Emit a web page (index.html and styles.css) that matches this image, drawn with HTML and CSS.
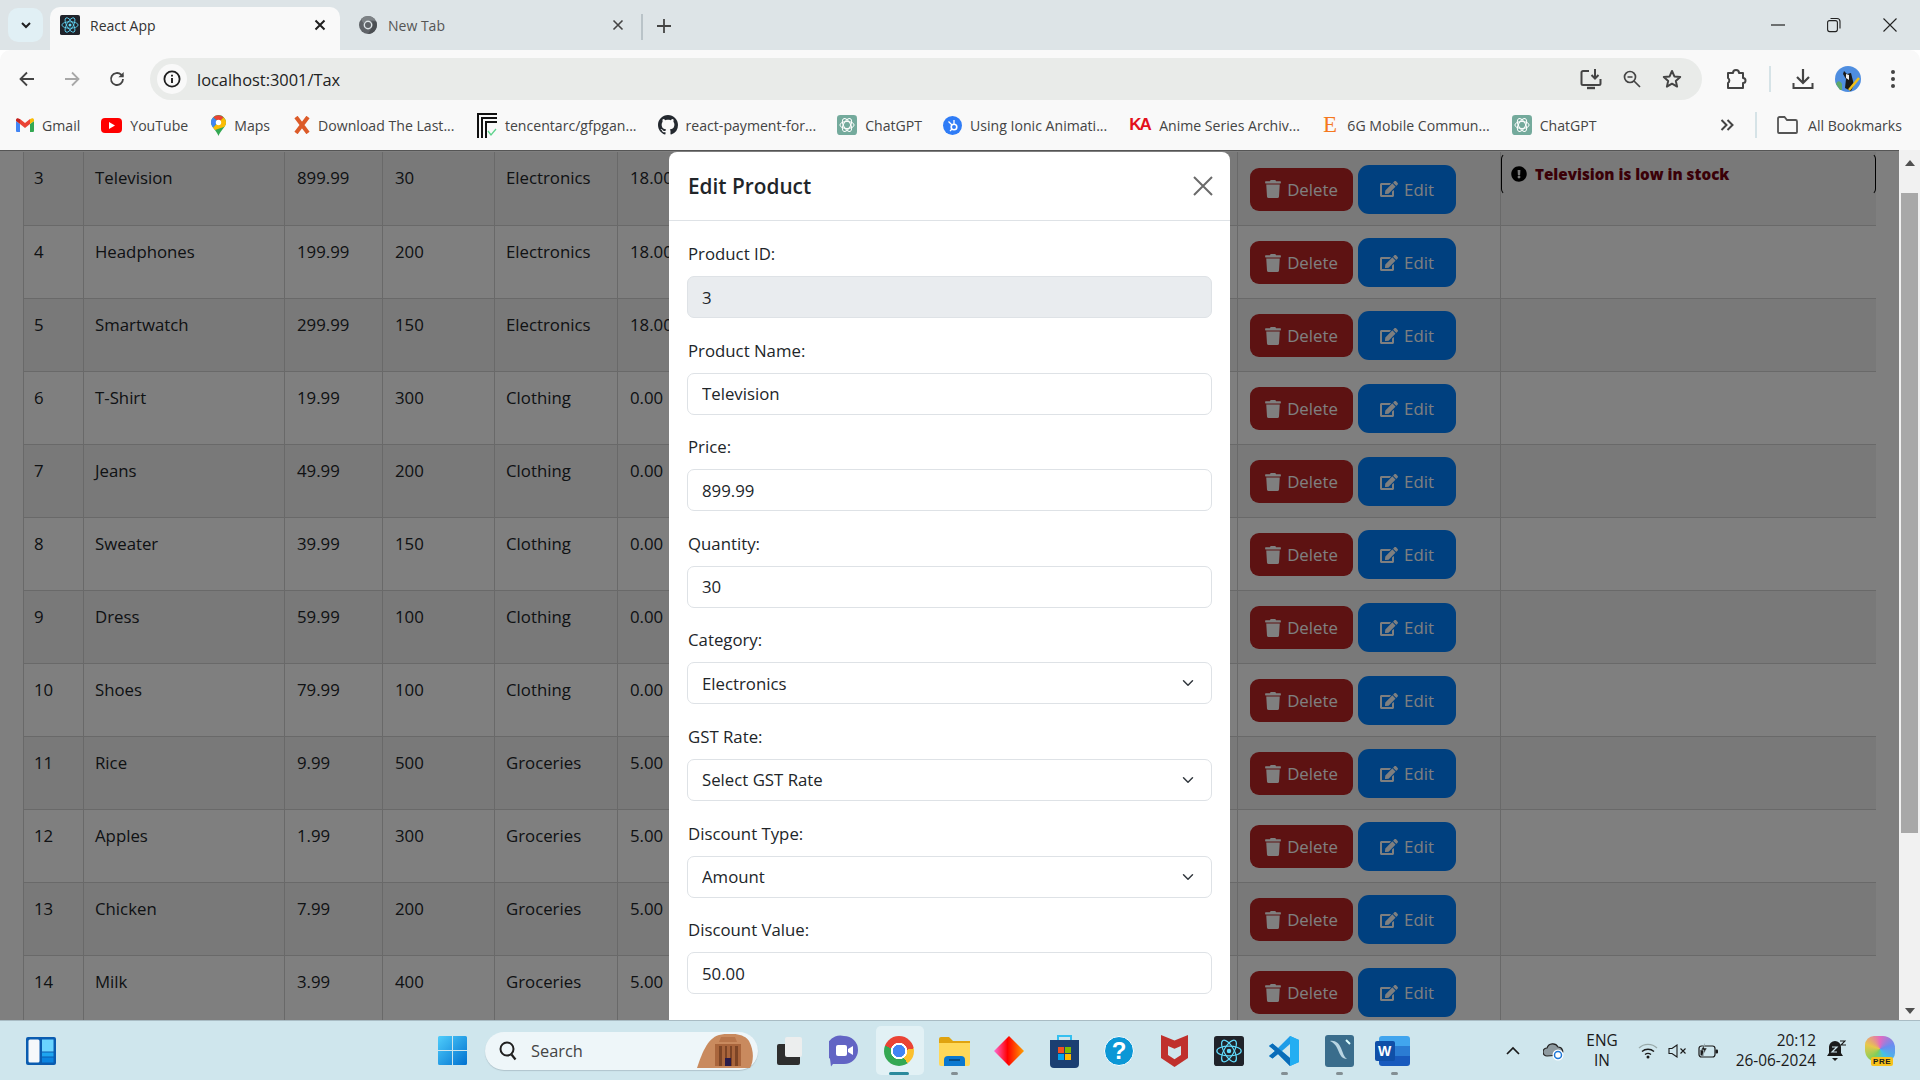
FILE: index.html
```html
<!DOCTYPE html>
<html lang="en">
<head>
    <meta charset="UTF-8">
    <title>React App</title>
    <link rel="stylesheet" href="styles.css">
</head>
<body>
    <svg class="defs" width="0" height="0">
        <symbol id="i-trash" viewBox="0 0 448 512"><path fill="currentColor" d="M432 32H312l-9.4-18.7A24 24 0 0 0 281.1 0H166.8a23.72 23.72 0 0 0-21.4 13.3L136 32H16A16 16 0 0 0 0 48v32a16 16 0 0 0 16 16h416a16 16 0 0 0 16-16V48a16 16 0 0 0-16-16zM53.2 467a48 48 0 0 0 47.9 45h245.8a48 48 0 0 0 47.9-45L416 128H32z"/></symbol>
        <symbol id="i-edit" viewBox="0 0 576 512"><path fill="currentColor" d="M402.6 83.2l90.2 90.2c3.8 3.8 3.8 10 0 13.8L274.4 405.6l-92.8 10.3c-12.4 1.4-22.9-9.1-21.5-21.5l10.3-92.8L388.8 83.2c3.8-3.8 10-3.8 13.8 0zm162-22.9l-48.8-48.8c-15.2-15.2-39.9-15.2-55.2 0l-35.4 35.4c-3.8 3.8-3.8 10 0 13.8l90.2 90.2c3.8 3.8 10 3.8 13.8 0l35.4-35.4c15.2-15.3 15.2-40 0-55.2zM384 346.2V448H64V128h229.8c3.2 0 6.2-1.3 8.5-3.5l40-40c7.6-7.6 2.2-20.5-8.5-20.5H48C21.5 64 0 85.5 0 112v352c0 26.5 21.5 48 48 48h352c26.5 0 48-21.5 48-48V306.2c0-10.7-12.9-16-20.5-8.5l-40 40c-2.2 2.3-3.5 5.3-3.5 8.5z"/></symbol>
        <symbol id="i-react" viewBox="0 0 32 32"><rect width="32" height="32" rx="3" fill="#20232a"/><g fill="none" stroke="#61dafb" stroke-width="1.3"><ellipse cx="16" cy="16" rx="13" ry="5.2"/><ellipse cx="16" cy="16" rx="13" ry="5.2" transform="rotate(60 16 16)"/><ellipse cx="16" cy="16" rx="13" ry="5.2" transform="rotate(120 16 16)"/></g><circle cx="16" cy="16" r="2.4" fill="#61dafb"/></symbol>
        <symbol id="i-gpt" viewBox="0 0 24 24"><rect width="24" height="24" rx="4" fill="#74aa9c"/><g fill="none" stroke="#fff" stroke-width="1.2"><ellipse cx="12" cy="12" rx="8.5" ry="4.2"/><ellipse cx="12" cy="12" rx="8.5" ry="4.2" transform="rotate(60 12 12)"/><ellipse cx="12" cy="12" rx="8.5" ry="4.2" transform="rotate(120 12 12)"/></g></symbol>
    </svg>

    <div class="tabstrip">
        <div class="tab-search"><svg width="14" height="14" viewBox="0 0 14 14"><path d="M3 5l4 4 4-4" fill="none" stroke="#1f1f1f" stroke-width="2"/></svg></div>
        <div class="tab tab-active">
            <svg class="tab-icon" width="20" height="20"><use href="#i-react"/></svg>
            <span class="tab-title">React App</span>
            <svg class="tab-close" width="12" height="12" viewBox="0 0 12 12"><path d="M1.5 1.5l9 9M10.5 1.5l-9 9" stroke="#1f1f1f" stroke-width="2"/></svg>
        </div>
        <div class="tab">
            <svg class="tab-icon" width="20" height="20" viewBox="0 0 20 20"><circle cx="10" cy="10" r="9" fill="#5f6368"/><path d="M10 1a9 9 0 0 1 7.800 4.500H10a4.500 4.500 0 0 0-4.300 3.200L3 4a9 9 0 0 1 7-3z" fill="#7d8286"/><path d="M18.200 6.500A9 9 0 0 1 10 19l3.800-6.500a4.500 4.500 0 0 0 0-6z" fill="#4a4e52"/><circle cx="10" cy="10" r="4.400" fill="#dde4e7"/><circle cx="10" cy="10" r="3" fill="#5f6368"/></svg>
            <span class="tab-title tab-title-dim">New Tab</span>
            <svg class="tab-close" width="12" height="12" viewBox="0 0 12 12"><path d="M1.5 1.5l9 9M10.5 1.5l-9 9" stroke="#444" stroke-width="1.6"/></svg>
        </div>
        <div class="tab-sep"></div>
        <svg class="tab-new" width="14" height="14" viewBox="0 0 14 14"><path d="M7 0v14M0 7h14" stroke="#444" stroke-width="1.8"/></svg>
        <div class="window-btns">
            <svg width="14" height="14" viewBox="0 0 14 14"><path d="M0 7h14" stroke="#222" stroke-width="1.2"/></svg>
            <svg width="14" height="16" viewBox="0 0 14 16"><rect x=".6" y="3.6" width="9.8" height="11" rx="2" fill="none" stroke="#222" stroke-width="1.1"/><path d="M3.5 1.5h6.5a3 3 0 0 1 3 3v7" fill="none" stroke="#222" stroke-width="1.1"/></svg>
            <svg width="14" height="14" viewBox="0 0 14 14"><path d="M.5.5l13 13M13.5.5l-13 13" stroke="#222" stroke-width="1.1"/></svg>
        </div>
    </div>

    <div class="toolbar">
        <svg class="nav-btn" width="16" height="16" viewBox="0 0 16 16"><path d="M15 8H2M8 1.5L1.5 8 8 14.5" fill="none" stroke="#444" stroke-width="1.8"/></svg>
        <svg class="nav-btn" width="16" height="16" viewBox="0 0 16 16"><path d="M1 8h13M8 1.5L14.5 8 8 14.5" fill="none" stroke="#a8a8a8" stroke-width="1.8"/></svg>
        <svg class="nav-btn" width="16" height="16" viewBox="0 0 16 16"><path d="M14 8a6 6 0 1 1-1.8-4.3L14 5.5" fill="none" stroke="#444" stroke-width="1.8"/><path d="M14.7 1v5.3H9.4" fill="#444"/></svg>
        <div class="omnibox">
            <div class="site-info"><svg width="18" height="18" viewBox="0 0 18 18"><circle cx="9" cy="9" r="7.6" fill="none" stroke="#1f1f1f" stroke-width="1.8"/><path d="M9 8v5M9 4.8v1.8" stroke="#1f1f1f" stroke-width="1.9"/></svg></div>
            <span class="url">localhost:3001/Tax</span>
            <div class="omni-icons">
                <svg width="22" height="22" viewBox="0 0 22 22"><path d="M9 3H3a1.5 1.5 0 0 0-1.5 1.5v11A1.5 1.5 0 0 0 3 17h16a1.5 1.5 0 0 0 1.5-1.5V11" fill="none" stroke="#444" stroke-width="2"/><path d="M7 20h8" stroke="#444" stroke-width="2.4"/><path d="M15 1v9M11.500 7l3.500 3.500L18.500 7" fill="none" stroke="#444" stroke-width="2"/></svg>
                <svg width="18" height="18" viewBox="0 0 18 18"><circle cx="7" cy="7" r="5.500" fill="none" stroke="#444" stroke-width="1.7"/><path d="M4.500 7h5M11 11l6 6" stroke="#444" stroke-width="1.7"/></svg>
                <svg width="20" height="20" viewBox="0 0 20 20"><path d="M10 2l2.400 5.400 5.800.6-4.400 3.900 1.300 5.700L10 14.700l-5.100 2.900 1.300-5.700L1.800 8l5.800-.6z" fill="none" stroke="#444" stroke-width="2" stroke-linejoin="round"/></svg>
            </div>
        </div>
        <svg class="tool-ext" width="22" height="22" viewBox="0 0 22 22"><path d="M3 5h5a3 3 0 0 1 6 0h4v5a2.500 2.500 0 0 1 0 5v5H3v-5a3 3 0 0 0 0-5z" fill="none" stroke="#444" stroke-width="2" stroke-linejoin="round"/></svg>
        <div class="tool-sep"></div>
        <svg class="tool-dl" width="22" height="22" viewBox="0 0 22 22"><path d="M11 1v13M5 9l6 6 6-6" fill="none" stroke="#444" stroke-width="2.200"/><path d="M1.500 15v5h19v-5" fill="none" stroke="#444" stroke-width="2"/></svg>
        <svg class="tool-avatar" width="26" height="26" viewBox="0 0 26 26"><circle cx="13" cy="13" r="13" fill="#4f8ee0"/><path d="M1 18c2-4 4-3 6 0v6H5z" fill="#5ea86a"/><path d="M9 5l3 3 4-1 3 12-3 6-6-3 1-9-3-5z" fill="#1a1a1a"/><path d="M11 8l3 1 0 5-3-2z" fill="#eee"/><path d="M14 24L24 12" stroke="#f2c21a" stroke-width="2.500"/></svg>
        <svg class="tool-menu" width="6" height="20" viewBox="0 0 6 20"><circle cx="3" cy="3" r="2" fill="#444"/><circle cx="3" cy="10" r="2" fill="#444"/><circle cx="3" cy="17" r="2" fill="#444"/></svg>
    </div>

    <div class="bookmarks">
        <a class="bm bm-gmail"><svg width="18" height="14" viewBox="0 0 18 14"><path d="M0 3v10a1 1 0 0 0 1 1h3V6z" fill="#4285f4"/><path d="M18 3v10a1 1 0 0 1-1 1h-3V6z" fill="#34a853"/><path d="M14 1v5l4-3V2c0-1.500-1.800-2.200-2.800-1.200z" fill="#fbbc04"/><path d="M4 6V1l5 4 5-4v5L9 10z" fill="#ea4335"/><path d="M0 3V2C0 .5 1.800-.2 2.800.8L4 1v5z" fill="#c5221f"/></svg>Gmail</a>
        <a class="bm bm-yt"><svg width="21" height="15" viewBox="0 0 21 15"><rect width="21" height="15" rx="4" fill="#f00"/><path d="M8 4l6 3.500L8 11z" fill="#fff"/></svg>YouTube</a>
        <a class="bm bm-maps"><svg width="15" height="21" viewBox="0 0 15 21"><path d="M7.500 21C6 16 0 12 0 7.500a7.500 7.500 0 0 1 15 0C15 12 9 16 7.500 21z" fill="#34a853"/><path d="M2 12.500L12.500 2.200A7.500 7.500 0 0 1 15 7.500c0 1.500-.7 3-1.500 4.300L4 15z" fill="#fbbc04"/><path d="M2.200 2.200a7.500 7.500 0 0 1 10.300 0L8 7z" fill="#ea4335"/><path d="M0 7.500a7.500 7.500 0 0 1 2.200-5.300L7 7l-5 5.500A9 9 0 0 1 0 7.500z" fill="#4285f4"/><circle cx="7.500" cy="7.500" r="2.700" fill="#fff"/></svg>Maps</a>
        <a class="bm bm-x"><svg width="16" height="18" viewBox="0 0 16 18"><path d="M2 1l12 16M14 1L2 17" stroke="#dc5a28" stroke-width="4"/></svg>Download The Last...</a>
        <a class="bm bm-tencent"><svg width="20" height="25" viewBox="0 0 20 25"><path d="M1 25V1h19M5 25V5h15M9 25V9h11" fill="none" stroke="#111" stroke-width="2"/><path d="M11 18l3 4 5-6" fill="none" stroke="#5fd38d" stroke-width="1.300"/></svg>tencentarc/gfpgan...</a>
        <a class="bm bm-gh"><svg width="20" height="20" viewBox="0 0 16 16"><path fill="#24292f" d="M8 0C3.580 0 0 3.580 0 8c0 3.540 2.290 6.530 5.470 7.590.4.070.55-.17.55-.38 0-.19-.01-.82-.01-1.490-2.010.37-2.530-.49-2.690-.94-.09-.23-.48-.94-.82-1.130-.28-.15-.68-.52-.01-.53.63-.01 1.080.58 1.230.82.72 1.210 1.870.87 2.330.66.07-.52.28-.87.51-1.070-1.780-.2-3.640-.89-3.640-3.950 0-.87.31-1.590.82-2.150-.08-.2-.36-1.020.08-2.120 0 0 .67-.21 2.200.82.64-.18 1.320-.27 2-.27.68 0 1.360.09 2 .27 1.530-1.040 2.200-.82 2.200-.82.44 1.100.16 1.920.08 2.120.51.56.82 1.270.82 2.150 0 3.070-1.870 3.750-3.650 3.950.29.25.54.73.54 1.480 0 1.070-.01 1.930-.01 2.200 0 .21.15.46.55.38A8.013 8.013 0 0016 8c0-4.420-3.580-8-8-8z"/></svg>react-payment-for...</a>
        <a class="bm bm-gpt"><svg width="20" height="20"><use href="#i-gpt"/></svg>ChatGPT</a>
        <a class="bm bm-hub"><svg width="19" height="21" viewBox="0 0 19 21"><circle cx="9.500" cy="10.500" r="9.500" fill="#2f7cf6"/><circle cx="11" cy="12" r="2.800" fill="none" stroke="#fff" stroke-width="1.600"/><path d="M11 9V5M9 10L5.500 6.500M9 14l-2 2" stroke="#fff" stroke-width="1.300"/></svg>Using Ionic Animati...</a>
        <a class="bm bm-ka"><span class="ka-mark">KA</span>Anime Series Archiv...</a>
        <a class="bm bm-e"><span class="e-mark">E</span>6G Mobile Commun...</a>
        <a class="bm bm-gpt2"><svg width="20" height="20"><use href="#i-gpt"/></svg>ChatGPT</a>
        <svg class="bm-more" width="14" height="12" viewBox="0 0 14 12"><path d="M1.500 1l5 5-5 5M7.500 1l5 5-5 5" fill="none" stroke="#444" stroke-width="2"/></svg>
        <div class="bm-sep"></div>
        <a class="bm bm-all"><svg width="21" height="18" viewBox="0 0 21 18"><path d="M1 16V2.500A1.500 1.500 0 0 1 2.500 1h5l2.500 3h8.500A1.500 1.500 0 0 1 20 5.500V16a1 1 0 0 1-1 1H2a1 1 0 0 1-1-1z" fill="none" stroke="#555" stroke-width="1.800"/></svg>All Bookmarks</a>
    </div>

    <div class="viewport">
        <div class="page">
            <table class="product-table">
                <colgroup>
                    <col class="c-id"><col class="c-name"><col class="c-price"><col class="c-qty"><col class="c-cat"><col class="c-gst"><col class="c-act"><col class="c-alert">
                </colgroup>
                <tbody>
                    <tr><td>3</td><td>Television</td><td>899.99</td><td>30</td><td>Electronics</td><td>18.00</td>
                        <td><div class="actions"><button class="btn btn-delete"><svg width="16" height="18"><use href="#i-trash"/></svg>Delete</button><button class="btn btn-edit"><svg width="18" height="16"><use href="#i-edit"/></svg>Edit</button></div></td>
                        <td class="alert-cell"><div class="alert"><svg width="16" height="16" viewBox="0 0 512 512"><path fill="#000" d="M504 256c0 136.997-111.043 248-248 248S8 392.997 8 256C8 119.083 119.043 8 256 8s248 111.083 248 248zm-248 50c-25.405 0-46 20.595-46 46s20.595 46 46 46 46-20.595 46-46-20.595-46-46-46zm-43.673-165.346l7.418 136c.347 6.364 5.609 11.346 11.982 11.346h48.546c6.373 0 11.635-4.982 11.982-11.346l7.418-136c.375-6.874-5.098-12.654-11.982-12.654h-63.383c-6.884 0-12.356 5.780-11.981 12.654z"/></svg><strong>Television is low in stock</strong></div></td></tr>
                    <tr><td>4</td><td>Headphones</td><td>199.99</td><td>200</td><td>Electronics</td><td>18.00</td>
                        <td><div class="actions"><button class="btn btn-delete"><svg width="16" height="18"><use href="#i-trash"/></svg>Delete</button><button class="btn btn-edit"><svg width="18" height="16"><use href="#i-edit"/></svg>Edit</button></div></td><td></td></tr>
                    <tr><td>5</td><td>Smartwatch</td><td>299.99</td><td>150</td><td>Electronics</td><td>18.00</td>
                        <td><div class="actions"><button class="btn btn-delete"><svg width="16" height="18"><use href="#i-trash"/></svg>Delete</button><button class="btn btn-edit"><svg width="18" height="16"><use href="#i-edit"/></svg>Edit</button></div></td><td></td></tr>
                    <tr><td>6</td><td>T-Shirt</td><td>19.99</td><td>300</td><td>Clothing</td><td>0.00</td>
                        <td><div class="actions"><button class="btn btn-delete"><svg width="16" height="18"><use href="#i-trash"/></svg>Delete</button><button class="btn btn-edit"><svg width="18" height="16"><use href="#i-edit"/></svg>Edit</button></div></td><td></td></tr>
                    <tr><td>7</td><td>Jeans</td><td>49.99</td><td>200</td><td>Clothing</td><td>0.00</td>
                        <td><div class="actions"><button class="btn btn-delete"><svg width="16" height="18"><use href="#i-trash"/></svg>Delete</button><button class="btn btn-edit"><svg width="18" height="16"><use href="#i-edit"/></svg>Edit</button></div></td><td></td></tr>
                    <tr><td>8</td><td>Sweater</td><td>39.99</td><td>150</td><td>Clothing</td><td>0.00</td>
                        <td><div class="actions"><button class="btn btn-delete"><svg width="16" height="18"><use href="#i-trash"/></svg>Delete</button><button class="btn btn-edit"><svg width="18" height="16"><use href="#i-edit"/></svg>Edit</button></div></td><td></td></tr>
                    <tr><td>9</td><td>Dress</td><td>59.99</td><td>100</td><td>Clothing</td><td>0.00</td>
                        <td><div class="actions"><button class="btn btn-delete"><svg width="16" height="18"><use href="#i-trash"/></svg>Delete</button><button class="btn btn-edit"><svg width="18" height="16"><use href="#i-edit"/></svg>Edit</button></div></td><td></td></tr>
                    <tr><td>10</td><td>Shoes</td><td>79.99</td><td>100</td><td>Clothing</td><td>0.00</td>
                        <td><div class="actions"><button class="btn btn-delete"><svg width="16" height="18"><use href="#i-trash"/></svg>Delete</button><button class="btn btn-edit"><svg width="18" height="16"><use href="#i-edit"/></svg>Edit</button></div></td><td></td></tr>
                    <tr><td>11</td><td>Rice</td><td>9.99</td><td>500</td><td>Groceries</td><td>5.00</td>
                        <td><div class="actions"><button class="btn btn-delete"><svg width="16" height="18"><use href="#i-trash"/></svg>Delete</button><button class="btn btn-edit"><svg width="18" height="16"><use href="#i-edit"/></svg>Edit</button></div></td><td></td></tr>
                    <tr><td>12</td><td>Apples</td><td>1.99</td><td>300</td><td>Groceries</td><td>5.00</td>
                        <td><div class="actions"><button class="btn btn-delete"><svg width="16" height="18"><use href="#i-trash"/></svg>Delete</button><button class="btn btn-edit"><svg width="18" height="16"><use href="#i-edit"/></svg>Edit</button></div></td><td></td></tr>
                    <tr><td>13</td><td>Chicken</td><td>7.99</td><td>200</td><td>Groceries</td><td>5.00</td>
                        <td><div class="actions"><button class="btn btn-delete"><svg width="16" height="18"><use href="#i-trash"/></svg>Delete</button><button class="btn btn-edit"><svg width="18" height="16"><use href="#i-edit"/></svg>Edit</button></div></td><td></td></tr>
                    <tr><td>14</td><td>Milk</td><td>3.99</td><td>400</td><td>Groceries</td><td>5.00</td>
                        <td><div class="actions"><button class="btn btn-delete"><svg width="16" height="18"><use href="#i-trash"/></svg>Delete</button><button class="btn btn-edit"><svg width="18" height="16"><use href="#i-edit"/></svg>Edit</button></div></td><td></td></tr>
                </tbody>
            </table>

            <div class="backdrop"></div>

            <div class="modal">
                <div class="modal-header">
                    <h2>Edit Product</h2>
                    <svg width="20" height="20" viewBox="0 0 20 20"><path d="M1 1l18 18M19 1L1 19" stroke="#6a6a6a" stroke-width="2"/></svg>
                </div>
                <form class="modal-body">
                    <label>Product ID:</label>
                    <input type="text" value="3" disabled>
                    <label>Product Name:</label>
                    <input type="text" value="Television">
                    <label>Price:</label>
                    <input type="text" value="899.99">
                    <label>Quantity:</label>
                    <input type="text" value="30">
                    <label>Category:</label>
                    <select><option>Electronics</option></select>
                    <label>GST Rate:</label>
                    <select><option>Select GST Rate</option></select>
                    <label>Discount Type:</label>
                    <select><option>Amount</option></select>
                    <label>Discount Value:</label>
                    <input type="text" value="50.00">
                    <label>Final Price:</label>
                </form>
            </div>
        </div>
        <div class="scrollbar">
            <div class="sb-up"></div>
            <div class="sb-thumb"></div>
            <div class="sb-down"></div>
        </div>
    </div>

    <div class="taskbar">
        <svg class="widgets" width="30" height="28" viewBox="0 0 30 28"><rect width="30" height="28" rx="2" fill="#0a5cb0"/><rect x="2.500" y="2.500" width="11" height="23" rx="1.500" fill="#f5f8fa"/><rect x="16" y="2.500" width="11.500" height="12" fill="#6ad4ff"/><rect x="16" y="15.500" width="11.500" height="4" fill="#1ea5f0"/><rect x="16" y="20.500" width="11.500" height="5" fill="#0a84e0"/></svg>
        <div class="task-center">
            <div class="task-slot task-win">
                <svg width="29" height="29" viewBox="0 0 29 29"><defs><linearGradient id="win" x1="0" y1="0" x2="1" y2="1"><stop offset="0" stop-color="#4fcdfb"/><stop offset="1" stop-color="#0071d0"/></linearGradient></defs><path fill="url(#win)" d="M0 1.500A1.500 1.500 0 0 1 1.500 0H14v14H0zM15 0h12.500A1.500 1.500 0 0 1 29 1.500V14H15zM0 15h14v14H1.500A1.500 1.500 0 0 1 0 27.500zM15 15h14v12.500a1.500 1.500 0 0 1-1.500 1.500H15z"/></svg>
            </div>
            <div class="task-search">
                <svg width="18" height="20" viewBox="0 0 18 20"><circle cx="8" cy="8" r="6.500" fill="none" stroke="#1f1f1f" stroke-width="2"/><path d="M12.500 13.500l4 5" stroke="#1f1f1f" stroke-width="2.200"/></svg>
                <span>Search</span>
                <svg class="petra" width="60" height="34" viewBox="0 0 60 34"><path d="M2 34C6 22 12 4 24 1c12-3 26-1 30 6 5 9 5 20 1 27z" fill="#c98a5e"/><path d="M20 32V10h26v22z" fill="#a9653c"/><path d="M24 8h18l-2-5H26z" fill="#b8754a"/><path d="M24 12h3v20h-3zM30 12h2v20h-2zM35 12h2v20h-2zM40 12h3v20h-3z" fill="#7d4526"/><rect x="30" y="24" width="6" height="8" fill="#2a1c4a"/></svg>
            </div>
            <div class="task-slot">
                <svg width="25" height="28" viewBox="0 0 25 28"><rect y="7" width="23" height="21" rx="2" fill="#2e2e2e"/><rect x="8" y="0" width="17" height="20" rx="2" fill="#eceeee"/></svg>
            </div>
            <div class="task-slot">
                <svg width="30" height="32" viewBox="0 0 30 32"><path d="M15 1a14 14 0 0 1 0 28H4l-2 2.500L1 24a14 14 0 0 1 14-23z" fill="#6264c4"/><rect x="7" y="10" width="11" height="11" rx="2" fill="#fff"/><path d="M19 14l5-3v9l-5-3z" fill="#fff"/></svg>
            </div>
            <div class="task-slot task-on">
                <div class="chrome-logo"></div>
                <i class="run-mark run-active"></i>
            </div>
            <div class="task-slot">
                <svg width="31" height="30" viewBox="0 0 31 30"><path d="M0 3a2 2 0 0 1 2-2h8l4 4h17v3H0z" fill="#e0a30f"/><path d="M0 7h31v21a2 2 0 0 1-2 2H2a2 2 0 0 1-2-2z" fill="#ffd859"/><path d="M5 30v-6a4 4 0 0 1 4-4h13a4 4 0 0 1 4 4v6z" fill="#0a78d0"/><path d="M10 24h11" stroke="#063f70" stroke-width="1.500"/></svg>
                <i class="run-mark"></i>
            </div>
            <div class="task-slot">
                <svg width="30" height="30" viewBox="0 0 30 30"><defs><linearGradient id="dia" x1="0" y1="0" x2="1" y2="0"><stop offset="0" stop-color="#ff6ad5"/><stop offset=".45" stop-color="#ff0000"/><stop offset="1" stop-color="#ffa000"/></linearGradient></defs><path d="M15 0l15 15-15 15L0 15z" fill="url(#dia)"/></svg>
            </div>
            <div class="task-slot">
                <svg width="29" height="34" viewBox="0 0 29 34"><path d="M8 7V2h13v5" fill="none" stroke="#35c0f0" stroke-width="2"/><path d="M0 6h29v24a4 4 0 0 1-4 4H4a4 4 0 0 1-4-4z" fill="#1b3f72"/><rect x="8" y="13" width="6" height="6" fill="#f25022"/><rect x="15" y="13" width="6" height="6" fill="#7fba00"/><rect x="8" y="20" width="6" height="6" fill="#00a4ef"/><rect x="15" y="20" width="6" height="6" fill="#ffb900"/></svg>
            </div>
            <div class="task-slot">
                <div class="help-badge">?</div>
            </div>
            <div class="task-slot">
                <svg width="27" height="32" viewBox="0 0 27 32"><path d="M0 0l13.500 5.500L27 0v23L13.500 32 0 23z" fill="#c0302c"/><path d="M7 11l6.500 2.800L20 11v9l-6.500 4.300L7 20z" fill="#cfe6ed"/></svg>
            </div>
            <div class="task-slot">
                <svg width="30" height="30"><use href="#i-react"/></svg>
            </div>
            <div class="task-slot">
                <svg width="30" height="30" viewBox="0 0 30 30"><path d="M21 0l9 4v22l-9 4-12-12-5.500 4.500L0 20l6-5-6-5 3.500-2.500L9 12z" fill="#1e9ce8"/><path d="M21 0l9 4v22l-9 4z" fill="#23aef2"/><path d="M21 8l-8 7 8 7z" fill="#cfe6ed"/><path d="M0 10l3.500-2.500L21 22v8L9 18l-5.500 4.500L0 20l6-5z" fill="#0a6cb8"/></svg>
                <i class="run-mark"></i>
            </div>
            <div class="task-slot">
                <svg width="29" height="32" viewBox="0 0 29 32"><rect width="29" height="32" rx="3" fill="#3a6d8c"/><path d="M5 6c5-1 9 2 11 7s3 9 6 11c-5 0-7-4-9-9S9 8 5 6z" fill="#b8d4e2"/><path d="M21 5l4 4" stroke="#dff" stroke-width="2"/></svg>
                <i class="run-mark"></i>
            </div>
            <div class="task-slot">
                <div class="word-icon"><span>W</span></div>
                <i class="run-mark"></i>
            </div>
        </div>
        <div class="tray">
            <svg class="tray-chev" width="14" height="9" viewBox="0 0 14 9"><path d="M1 8l6-6 6 6" fill="none" stroke="#1a1a1a" stroke-width="1.700"/></svg>
            <svg class="tray-cloud" width="21" height="20" viewBox="0 0 21 20"><path d="M4 15a4 4 0 0 1 0-8 6 6 0 0 1 11-1 4.500 4.500 0 0 1 3 8z" fill="#8e9aa0" stroke="#222" stroke-width="1.200"/><circle cx="15" cy="14" r="5.500" fill="#fff"/><circle cx="15" cy="14" r="3.500" fill="none" stroke="#1e78d8" stroke-width="1.500"/></svg>
            <div class="tray-lang">ENG<br>IN</div>
            <svg class="tray-wifi" width="20" height="16" viewBox="0 0 20 16"><path d="M1 5a13 13 0 0 1 18 0" fill="none" stroke="#9aa" stroke-width="1.300"/><path d="M4 8.500a9 9 0 0 1 12 0M7 11.500a5 5 0 0 1 6 0" fill="none" stroke="#1a1a1a" stroke-width="1.400"/><circle cx="10" cy="14" r="1.500" fill="#1a1a1a"/></svg>
            <svg class="tray-sound" width="20" height="14" viewBox="0 0 20 14"><path d="M1 4.500h3L9 1v12L4 9.500H1z" fill="none" stroke="#1a1a1a" stroke-width="1.100"/><path d="M12.500 4.500l5 5M17.500 4.500l-5 5" stroke="#1a1a1a" stroke-width="1.100"/></svg>
            <svg class="tray-batt" width="21" height="17" viewBox="0 0 21 17"><rect x="1" y="4" width="16" height="11" rx="2.500" fill="none" stroke="#1a1a1a" stroke-width="1.200"/><rect x="17.500" y="7.500" width="2.500" height="4" rx="1" fill="#1a1a1a"/><path d="M2.500 13.500V8l3 0 0 5.500z" fill="#1a1a1a"/><path d="M7 1L3 8h3l-1 5 4-7H6z" fill="#1a1a1a" stroke="#cfe6ed" stroke-width=".5"/></svg>
            <div class="tray-clock">20:12<br>26-06-2024</div>
            <svg class="tray-bell" width="20" height="21" viewBox="0 0 20 21"><path d="M9 1a6 6 0 0 0-6 6v6l-2 3h16l-2-3V7a6 6 0 0 0-6-6z" fill="#1a1a1a"/><path d="M6 18h6l-3 3z" fill="#1a1a1a"/><path d="M6 7h5l-5 5h5" fill="none" stroke="#cfe6ed" stroke-width="1.200"/><path d="M14 1h5l-4 4h5" fill="none" stroke="#1a1a1a" stroke-width="1.100"/></svg>
            <div class="tray-copilot"><i></i><span>PRE</span></div>
        </div>
    </div>
</body>
</html>
```

FILE: styles.css
```css
* {
    box-sizing: border-box;
}

html, body {
    height: 100%;
    margin: 0;
}

body {
    display: flex;
    flex-direction: column;
    height: 1080px;
    overflow: hidden;
    font-family: "Open Sans", sans-serif;
    color: #212529;
    background: #fff;
}

.defs {
    position: absolute;
}

/* browser chrome */
.tabstrip {
    display: flex;
    align-items: flex-end;
    height: 50px;
    padding-left: 8px;
    background: #dde4e7;
}

.tab-search {
    display: flex;
    align-items: center;
    justify-content: center;
    width: 35px;
    height: 34px;
    margin: 0 7px 8px 0;
    border-radius: 10px;
    background: #e1f0f5;
}

.tab {
    display: flex;
    align-items: center;
    width: 290px;
    height: 43px;
    padding: 0 14px 7px 18px;
    border-radius: 10px 10px 0 0;
}

.tab + .tab {
    padding-left: 18px;
    padding-right: 0;
    width: 284px;
}

.tab-active {
    padding-left: 10px;
    background: #f9f9f9;
}

.tab-icon {
    flex: none;
    width: 20px;
    height: 20px;
    margin-right: 10px;
}

.tab-title {
    flex: 1;
    font-size: 14px;
    color: #333;
}

.tab-title-dim {
    color: #555;
}

.tab-sep {
    width: 2px;
    height: 26px;
    margin: 0 0 10px 17px;
    background: #b9c3c8;
}

.tab-new {
    margin: 0 0 17px 14px;
}

.window-btns {
    display: flex;
    align-items: center;
    gap: 42px;
    margin: 0 23px 17px auto;
}

.toolbar {
    display: flex;
    align-items: center;
    height: 50px;
    padding: 8px 0 0 19px;
    border-radius: 10px 10px 0 0;
    background: #f9f9f9;
}

.nav-btn {
    flex: none;
    margin-right: 29px;
}

.omnibox {
    display: flex;
    align-items: center;
    width: 1552px;
    height: 42px;
    margin-left: -4px;
    border-radius: 21px;
    background: #e9ebe9;
}

.site-info {
    display: flex;
    align-items: center;
    justify-content: center;
    width: 30px;
    height: 30px;
    margin-left: 7px;
    border-radius: 50%;
    background: #f9f9f9;
}

.url {
    margin-left: 10px;
    font-size: 16.4px;
    color: #222;
}

.omni-icons {
    display: flex;
    align-items: center;
    gap: 21px;
    margin: 0 20px 0 auto;
}

.tool-ext {
    margin-left: 23px;
}

.tool-sep {
    width: 2px;
    height: 26px;
    margin-left: 22px;
    background: #d6e3e7;
}

.tool-dl {
    margin-left: 21px;
}

.tool-avatar {
    margin-left: 21px;
}

.tool-menu {
    margin-left: 29px;
}

.bookmarks {
    position: relative;
    display: flex;
    align-items: center;
    height: 50px;
    padding-left: 16px;
    background: #f9f9f9;
}

.bm {
    display: flex;
    flex: none;
    align-items: center;
    gap: 8px;
    font-size: 14.1px;
    color: #444;
    white-space: nowrap;
}

.bm-yt { margin-left: 21px; }
.bm-maps { margin-left: 23px; }
.bm-x { margin-left: 24px; }
.bm-tencent { margin-left: 22.4px; }
.bm-gh { margin-left: 21px; }
.bm-gpt { margin-left: 21px; }
.bm-hub { margin-left: 21px; }
.bm-ka { margin-left: 22px; }
.bm-e { margin-left: 23px; }
.bm-gpt2 { margin-left: 22px; }

.ka-mark {
    margin-right: 1.300px;
    font-family: "Liberation Sans", sans-serif;
    font-size: 17px;
    font-weight: bold;
    letter-spacing: -2px;
    color: #e3101c;
}

.e-mark {
    margin-right: 2.400px;
    font-family: "Liberation Serif", serif;
    font-size: 23px;
    color: #f5781e;
}

.bm-more {
    margin-left: auto;
}

.bm-sep {
    width: 2px;
    height: 26px;
    margin-left: 21px;
    background: #d6e3e7;
}

.bm-all {
    gap: 10px;
    margin: 0 18px 0 20px;
}

/* page */
.viewport {
    display: flex;
    flex: 1;
    min-height: 0;
}

.page {
    position: relative;
    flex: 1;
    padding: 1px 0 0 23px;
    overflow: hidden;
    border-top: 1px solid #555;
}

.product-table {
    width: 1852px;
    border-collapse: collapse;
    table-layout: fixed;
    font-size: 16.8px;
}

.c-id { width: 60px; }
.c-name { width: 201px; }
.c-price { width: 98px; }
.c-qty { width: 112px; }
.c-cat { width: 123px; }
.c-gst { width: 620px; }
.c-act { width: 263px; }
.c-alert { width: 375px; }

.product-table td {
    height: 73px;
    padding: 13px 12px;
    vertical-align: top;
    border: 1px solid #d2d2d2;
    line-height: 26px;
}

.product-table tr:nth-child(odd) td {
    background: #f2f2f2;
}

.product-table td:last-child {
    border-right: 0;
}

.product-table tr:first-child td {
    border-top: 0;
}

.product-table td:first-child {
    padding-left: 10px;
}

.product-table td:nth-child(2) {
    padding-left: 11px;
}

.product-table td:nth-child(5) {
    padding-left: 11px;
}

.product-table td:nth-child(7) {
    padding: 2px 0 0 12px;
    vertical-align: middle;
}

.actions {
    display: flex;
    align-items: center;
    gap: 5px;
}

.btn {
    display: flex;
    align-items: center;
    justify-content: center;
    gap: 6px;
    border: 0;
    font-family: "Open Sans", sans-serif;
    font-size: 16.8px;
    color: #fff;
}

.btn-delete {
    width: 103px;
    height: 43px;
    border-radius: 9px;
    background: #ba2424;
}

.btn-edit {
    width: 98px;
    height: 49px;
    border-radius: 11px;
    background: #0080ff;
}

.product-table td.alert-cell {
    padding: 0;
}

.alert {
    display: flex;
    align-items: center;
    gap: 8px;
    height: 42px;
    margin-top: 1px;
    padding: 0 0 0 9px;
    border: 1px solid #000;
    border-top-color: transparent;
    border-bottom-color: transparent;
    border-radius: 6px;
    background: #f2f2f2;
    font-size: 15.2px;
    font-weight: 700;
    color: #74000f;
}

.backdrop {
    position: absolute;
    inset: 0;
    background: rgba(0, 0, 0, 0.5);
}

.modal {
    position: absolute;
    top: 1px;
    left: 669px;
    width: 561px;
    height: 1000px;
    border-radius: 8px 8px 0 0;
    background: #fff;
}

.modal-header {
    display: flex;
    align-items: center;
    justify-content: space-between;
    height: 69px;
    padding: 0 17px 0 19px;
    border-bottom: 1px solid #dee2e6;
}

.modal-header h2 {
    margin: 0;
    font-size: 20.8px;
    font-weight: 600;
    color: #212529;
}

.modal-body {
    display: block;
    padding: 19px 18px 0;
}

.modal-body label {
    display: block;
    height: 27px;
    margin-bottom: 9px;
    padding-left: 1px;
    font-size: 16.8px;
    line-height: 27px;
    color: #212529;
}

.modal-body input,
.modal-body select {
    display: block;
    width: 100%;
    height: 42px;
    margin-bottom: 18.6px;
    padding: 0 14px;
    border: 1px solid #dee2e6;
    border-radius: 7px;
    background-color: #fff;
    font-family: "Open Sans", sans-serif;
    font-size: 16.8px;
    color: #212529;
}

.modal-body input:disabled {
    background: #e9ecef;
    opacity: 1;
}

.modal-body select {
    appearance: none;
    background-image: url("data:image/svg+xml,%3csvg xmlns='http://www.w3.org/2000/svg' viewBox='0 0 16 16'%3e%3cpath fill='none' stroke='%23343a40' stroke-linecap='round' stroke-linejoin='round' stroke-width='2' d='m2 5 6 6 6-6'/%3e%3c/svg%3e");
    background-repeat: no-repeat;
    background-position: right 15px center;
    background-size: 16px 12px;
}

.scrollbar {
    display: flex;
    flex: none;
    flex-direction: column;
    align-items: center;
    width: 21px;
    background: #f1f1f1;
}

.sb-up,
.sb-down {
    flex: none;
    width: 0;
    height: 0;
    border-right: 5px solid transparent;
    border-left: 5px solid transparent;
}

.sb-up {
    margin-top: 10px;
    border-bottom: 6px solid #505050;
}

.sb-down {
    margin: auto 0 6px;
    border-top: 6px solid #505050;
}

.sb-thumb {
    width: 17px;
    height: 640px;
    margin-top: 27px;
    background: #a8a8a8;
}

/* taskbar */
.taskbar {
    position: relative;
    display: flex;
    flex: none;
    align-items: center;
    height: 60px;
    padding-left: 26px;
    border-top: 1px solid #a9bcc4;
    background: #cfe6ed;
}

.task-center {
    display: flex;
    align-items: center;
    height: 100%;
    margin-left: 364px;
}

.task-slot {
    position: relative;
    display: flex;
    flex: none;
    align-items: center;
    justify-content: center;
    width: 55px;
    height: 100%;
}

.task-win {
    width: 65px;
}

.task-search {
    display: flex;
    flex: none;
    align-items: center;
    width: 273px;
    height: 38px;
    margin-right: 3.5px;
    padding-left: 14px;
    border-radius: 19px;
    background: #eef6f9;
    box-shadow: 0 1px 1px #b0c4cc;
    font-size: 16.4px;
    color: #444;
}

.task-search span {
    margin-left: 14px;
}

.petra {
    margin-left: auto;
    margin-right: 3px;
}

.task-on::before {
    content: "";
    position: absolute;
    top: 5px;
    bottom: 5px;
    left: 4px;
    right: 3px;
    border-radius: 5px;
    background: #e2f1f5;
}

.chrome-logo {
    position: relative;
    width: 30px;
    height: 30px;
    border-radius: 50%;
    background: radial-gradient(circle, #4285f4 0 6px, #fff 6.5px 8px, transparent 8.5px), conic-gradient(from -70deg, #ea4335 0 150deg, #fbc02d 150deg 215deg, #34a853 215deg 360deg);
}

.run-mark {
    position: absolute;
    bottom: 5px;
    left: 50%;
    width: 7px;
    height: 3px;
    margin-left: -3px;
    border-radius: 2px;
    background: #838f94;
}

.run-active {
    width: 20px;
    margin-left: -10px;
    background: #2b8a9c;
}

.help-badge {
    width: 30px;
    height: 30px;
    border: 1.5px solid #fff;
    border-radius: 50%;
    background: #0b97d6;
    font-family: "Liberation Sans", sans-serif;
    font-size: 24px;
    font-weight: bold;
    line-height: 27px;
    text-align: center;
    color: #fff;
}

.word-icon {
    position: relative;
    width: 31px;
    height: 30px;
    border-radius: 3px;
    background: linear-gradient(#41a5ee 0 33%, #2b7cd3 33% 66%, #185abd 66%);
}

.word-icon span {
    position: absolute;
    top: 5px;
    left: -4px;
    width: 20px;
    height: 20px;
    border-radius: 2px;
    background: #0f4fa8;
    font-family: "Liberation Sans", sans-serif;
    font-size: 14px;
    font-weight: bold;
    line-height: 20px;
    text-align: center;
    color: #fff;
}

.tray {
    display: flex;
    align-items: center;
    height: 100%;
    margin-left: auto;
    padding-right: 25px;
    color: #1a1a1a;
}

.tray-cloud { margin-left: 23px; }
.tray-wifi { margin-left: 16px; }
.tray-sound { margin-left: 10px; }
.tray-batt { margin-left: 10px; }

.tray-lang {
    width: 40px;
    margin-left: 18px;
    font-size: 15.4px;
    line-height: 20px;
    text-align: center;
}

.tray-clock {
    width: 92px;
    margin-left: 5px;
    font-size: 15.4px;
    line-height: 20px;
    text-align: right;
    white-space: nowrap;
}

.tray-bell {
    margin-left: 10px;
}

.tray-copilot {
    position: relative;
    width: 30px;
    height: 30px;
    margin-left: 19px;
}

.tray-copilot i {
    position: absolute;
    inset: 0 0 4px;
    border-radius: 9px 12px 9px 12px;
    background: conic-gradient(#e36ac0, #6a8cf0, #43c0e8, #7fcf5a, #e8c84a, #e36ac0);
}

.tray-copilot span {
    position: absolute;
    bottom: 0;
    left: 6px;
    padding: 0 2px;
    border-radius: 2px;
    background: #f7c21c;
    font-family: "Liberation Sans", sans-serif;
    font-size: 8px;
    font-weight: bold;
    letter-spacing: .6px;
    color: #1a1a1a;
}
```
